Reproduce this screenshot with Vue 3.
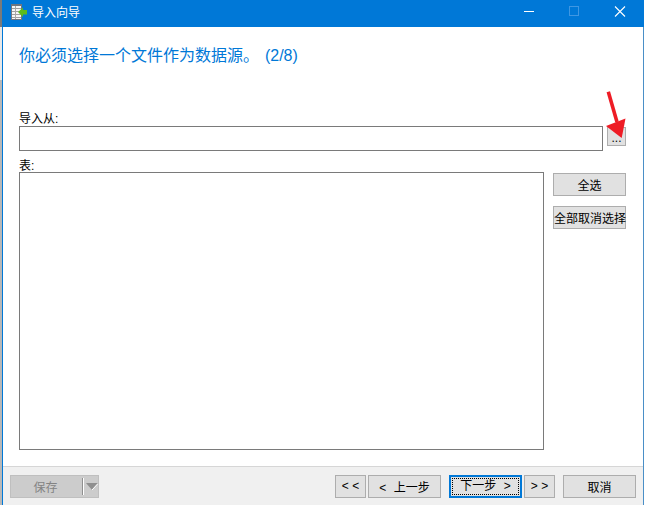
<script setup>
const navBefore = [
  { text: '< <', cls: 'narrow' },
  { text: '< 上一步', cls: 'wide' },
]
</script>

<template>
  <div class="screen">
    <div class="desktop-strip"></div>
    <div class="window">
      <header class="titlebar">
        <svg class="app-icon" width="17" height="17" viewBox="0 0 17 17">
          <rect x="0" y="0" width="11" height="16" fill="#6f7680" />
          <rect x="1" y="2" width="9" height="13" fill="#f6f6f6" />
          <path d="M1 4.5h9M1 7.5h9M1 10.5h9M1 13.5h9" stroke="#a0a0a0" />
          <path d="M4.5 2v13" stroke="#a8a8a8" />
          <path d="M7 8l5-4.5v2.5h4v4.5h-4v2.5z" fill="#5cbb1c" />
        </svg>
        <span class="title">导入向导</span>
        <div class="caption">
          <svg class="cap" width="46" height="27" viewBox="0 0 46 27"><path d="M19 11.5h10" stroke="#fff" /></svg>
          <svg class="cap" width="46" height="27" viewBox="0 0 46 27"><rect x="18.5" y="6.5" width="9" height="9" fill="none" stroke="#3f97e3" /></svg>
          <svg class="cap" width="46" height="27" viewBox="0 0 46 27"><path d="M18 6.5l10 10M28 6.5l-10 10" stroke="#fff" stroke-width="1.1" /></svg>
        </div>
      </header>

      <main class="body">
        <h1 class="heading">你必须选择一个文件作为数据源。 (2/8)</h1>
        <label class="label from-label">导入从:</label>
        <div class="source-row">
          <div class="field"></div>
          <button class="btn browse">...</button>
        </div>
        <label class="label table-label">表:</label>
        <div class="table-row">
          <div class="listbox"></div>
          <div class="side">
            <button class="btn side-btn">全选</button>
            <button class="btn side-btn">全部取消选择</button>
          </div>
        </div>
      </main>

      <footer class="footer">
        <div class="split">
          <span class="split-text">保存</span>
          <span class="split-line"></span>
          <svg class="split-arrow" width="12" height="8" viewBox="0 0 12 8"><path d="M0 0h12L6 7z" fill="#8f8f8f" /><path d="M12 0.5L6 7" stroke="#fff" /></svg>
        </div>
        <div class="nav">
          <button v-for="b in navBefore" :key="b.text" class="btn" :class="b.cls">{{ b.text }}</button>
          <button class="btn wide next"><span class="focus">下一步 &gt;</span></button>
          <button class="btn narrow">&gt; &gt;</button>
          <button class="btn wide cancel">取消</button>
        </div>
      </footer>
    </div>

    <svg class="arrow" width="26" height="56" viewBox="0 0 26 56">
      <path d="M5.3 1.7L14 32" stroke="#ee1c25" stroke-width="3.6" fill="none" />
      <path d="M3 36L22.5 28.5L18.7 48z" fill="#ee1c25" />
    </svg>
  </div>
</template>

<style>
html, body { margin: 0; background: #fff; }
</style>

<style scoped>
.screen {
  position: relative;
  display: flex;
  width: 645px;
  height: 505px;
  overflow: hidden;
  background: #fff;
  font-family: "Liberation Sans", "Noto Sans CJK SC", sans-serif;
  font-size: 12px;
  color: #000;
}
.desktop-strip { width: 2px; flex: none; background: linear-gradient(#7a7a7a 0 27px, #e8e8e8 27px 80px, #b8b8b8 80px); }
.window {
  width: 642px;
  height: 505px;
  flex: none;
  display: flex;
  flex-direction: column;
  border-left: 1px solid #0078d7;
  border-right: 1px solid #4a8fc7;
  box-sizing: border-box;
}
.titlebar {
  height: 27px;
  flex: none;
  display: flex;
  align-items: flex-start;
  background: #0078d7;
  color: #fff;
  padding-left: 9px;
  margin: 0 -1px;
}
.app-icon { margin-top: 4px; flex: none; }
.title { margin-left: 4px; margin-top: 6px; line-height: 14px; font-size: 12px; }
.caption { margin-left: auto; margin-right: 1px; display: flex; }
.cap { display: block; }
.body {
  flex: none;
  display: flex;
  flex-direction: column;
  padding: 0 17px 0 16px;
}
.heading {
  margin: 18px 0 0;
  height: 22px;
  font-size: 16px;
  line-height: 22px;
  font-weight: 400;
  color: #0078d7;
  word-spacing: 1.5px;
}
.label { display: block; height: 14px; line-height: 14px; }
.from-label { margin-top: 45px; }
.table-label { margin-top: 8px; height: 13px; }
.source-row { display: flex; align-items: flex-start; }
.field {
  width: 584px;
  height: 25px;
  flex: none;
  box-sizing: border-box;
  background: #fff;
  border: 1px solid #7a7a7a;
}
.btn {
  box-sizing: border-box;
  margin: 0;
  padding: 0 0 1px;
  background: #e1e1e1;
  border: 1px solid #adadad;
  border-radius: 0;
  color: #000;
  font: inherit;
  white-space: nowrap;
  flex: none;
}
.browse { width: 19px; height: 19px; margin-left: 4px; margin-top: 1px; line-height: 20px; }
.table-row { display: flex; align-items: flex-start; }
.listbox {
  width: 525px;
  height: 278px;
  flex: none;
  box-sizing: border-box;
  border: 1px solid #7a7a7a;
  background: #fff;
}
.side { display: flex; flex-direction: column; gap: 10px; margin-left: 9px; margin-top: 1px; }
.side-btn { width: 73px; height: 23px; }
.footer {
  flex: 1;
  display: flex;
  align-items: flex-start;
  justify-content: space-between;
  box-sizing: border-box;
  margin-top: 16px;
  padding: 8px 7px 0 7px;
  background: #f0f0f0;
  border-top: 1px solid #d6d6d6;
}
.split {
  width: 89px;
  height: 23px;
  box-sizing: border-box;
  display: flex;
  align-items: center;
  background: #cccccc;
  border: 1px solid #bfbfbf;
  color: #838383;
}
.split-text { width: 71px; padding-right: 2px; box-sizing: border-box; text-align: center; }
.split-line { width: 1px; height: 17px; background: #8f8f8f; box-shadow: 1px 0 0 #fff; }
.split-arrow { margin-left: 3px; margin-top: 1px; }
.nav { display: flex; word-spacing: 2px; }
.narrow { width: 31px; height: 23px; }
.wide { width: 73px; height: 23px; word-spacing: 4px; }
.nav .wide:nth-child(2) { margin-left: 2px; }
.next {
  margin-left: 8px;
  margin-right: 2px;
  border: 2px solid #0078d7;
  padding: 1px;
}
.focus {
  display: block;
  height: 100%;
  line-height: 15px;
  box-sizing: border-box;
  border: 1px dotted #000;
}
.cancel { margin-left: 8px; }
.arrow {
  position: absolute;
  left: 603px;
  top: 90px;
}
</style>
